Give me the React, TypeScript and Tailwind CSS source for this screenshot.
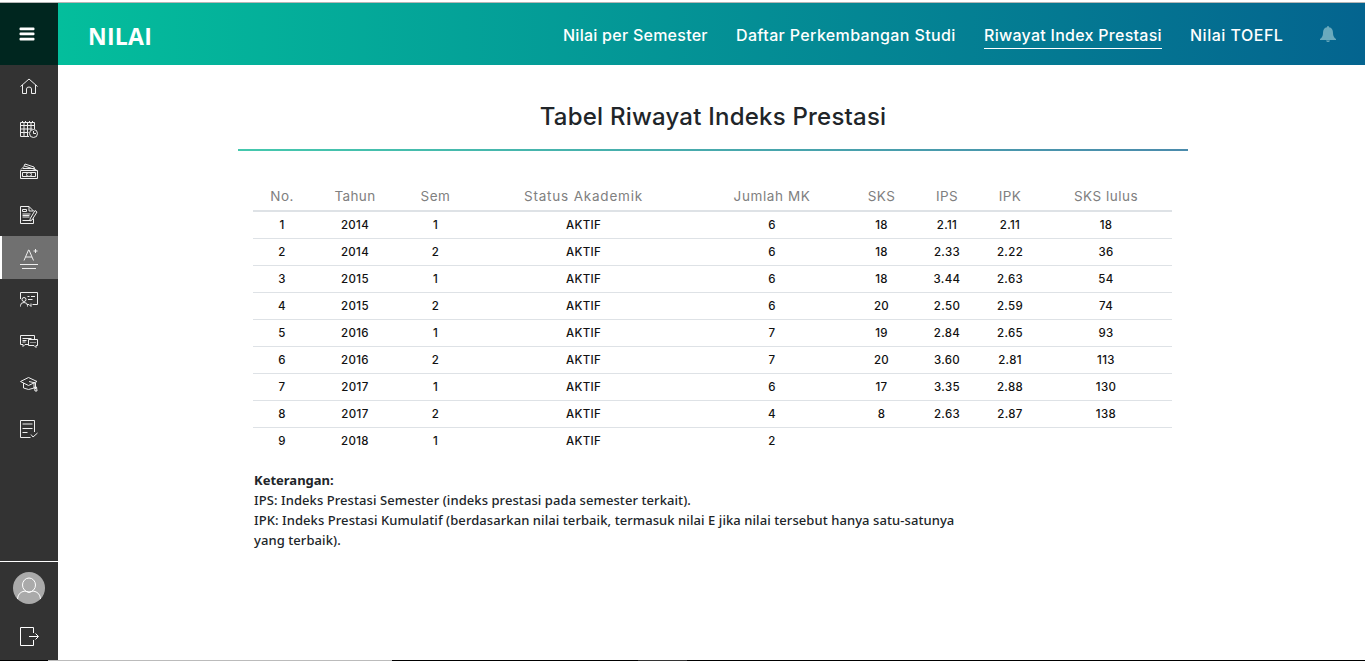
import React from "react";

const navLinks = [
  { label: "Nilai per Semester", box: "w-[145px] tracking-[0.26px]" },
  { label: "Daftar Perkembangan Studi", box: "w-[220px] tracking-[0.37px]" },
  { label: "Riwayat Index Prestasi", box: "w-[178px] tracking-[0.27px]", active: true },
  { label: "Nilai TOEFL", box: "w-[93px] tracking-[0.5px]" },
];

const headings = [
  { label: "No.", spacing: "tracking-[0.4px]" },
  { label: "Tahun", spacing: "tracking-[0.4px]" },
  { label: "Sem", spacing: "tracking-[0.5px]" },
  { label: "Status Akademik", spacing: "tracking-[0.8px]" },
  { label: "Jumlah MK", spacing: "tracking-[0.6px]" },
  { label: "SKS", spacing: "tracking-[0.4px]" },
  { label: "IPS", spacing: "tracking-[0.4px]" },
  { label: "IPK", spacing: "tracking-[0.4px]" },
  { label: "SKS lulus", spacing: "tracking-[0.5px]" },
];

const rows = [
  ["1", "2014", "1", "AKTIF", "6", "18", "2.11", "2.11", "18"],
  ["2", "2014", "2", "AKTIF", "6", "18", "2.33", "2.22", "36"],
  ["3", "2015", "1", "AKTIF", "6", "18", "3.44", "2.63", "54"],
  ["4", "2015", "2", "AKTIF", "6", "20", "2.50", "2.59", "74"],
  ["5", "2016", "1", "AKTIF", "7", "19", "2.84", "2.65", "93"],
  ["6", "2016", "2", "AKTIF", "7", "20", "3.60", "2.81", "113"],
  ["7", "2017", "1", "AKTIF", "6", "17", "3.35", "2.88", "130"],
  ["8", "2017", "2", "AKTIF", "4", "8", "2.63", "2.87", "138"],
  ["9", "2018", "1", "AKTIF", "2", "", "", "", ""],
];

const grid = "grid grid-cols-[58px_88px_73px_223px_154px_65px_66px_60px_132px] text-center";

function Icon({ children }: { children: React.ReactNode }) {
  return (
    <svg width="20" height="20" viewBox="0 0 20 20" fill="none" stroke="#eeeeee" strokeWidth="1" className="block">
      {children}
    </svg>
  );
}

const menu: { name: string; box: string; art: React.ReactNode }[] = [
  {
    name: "Beranda",
    box: "h-[43px]",
    art: <path d="M1.500 9.500 10 2l8.500 7.500M3.500 8v8.500h4V12q0-2 2.500-2t2.500 2v4.500h4V8" />,
  },
  {
    name: "Jadwal",
    box: "h-[43px]",
    art: (
      <>
        <path d="M10 16.500H1.500V2.500H15.500V9M1.500 5.500h14M1.500 9h12M1.500 12.500h8M5 2v14.500M8.500 2v14.500M12 2v8M3.500 1v2M6.500 1v2M10.500 1v2M13.500 1v2" />
        <circle cx="14.500" cy="13.500" r="4" fill="#333333" />
        <path d="M14.500 11v2.500h2.500" />
      </>
    ),
  },
  {
    name: "Keuangan",
    box: "h-[42px]",
    art: (
      <>
        <path d="M1.500 8.500h17v8h-17zM3.500 10.500h13v4h-13zM2 7.500 5.500 4l12 4M5 4l1-2 9 3 1 2.500M4 6.500h11" />
        <ellipse cx="10" cy="12.500" rx="2.500" ry="2" fill="#333333" />
      </>
    ),
  },
  {
    name: "Registrasi",
    box: "h-[43px]",
    art: (
      <>
        <path d="M14.500 13.500v5h-13v-17h8.500l4.500 4.500M10 1.500V6h4.500M3.500 4.500h4v2h-4zM3.500 9h8M3.500 10.500h7M3.500 12h7M3.500 15.500h8" />
        <path d="m11 14 5-8.500 2 1.500-5 8-2 1z" fill="#333333" />
      </>
    ),
  },
  {
    name: "Nilai",
    box: "h-[43px] bg-[#707070] border-l-2 border-white pr-[2px]",
    art: (
      <>
        <path d="M5 14.500 9.500 4h.5l4.500 10.500M6.500 11h6.500" />
        <path d="M16.500 3v4M14.500 5h4" />
        <path d="M1 18.500h18M3 22.500h14" />
      </>
    ),
  },
  {
    name: "Bimbingan",
    box: "h-[42px]",
    art: (
      <>
        <path d="M1.500 9V2.500h17v12h-5M8 14.500h2M1.500 16.500v-1q0-3 3.500-3t3.500 3v1" />
        <circle cx="5" cy="9.500" r="2" />
        <path d="M8.500 6.500h2M12 6.500h4M9 9.500h4.500M10 14.500l2 2v-3" />
      </>
    ),
  },
  {
    name: "Pesan",
    box: "h-[42px]",
    art: (
      <>
        <path d="M9 12.500H6l-2 2v-2H1.500v-9h14V7M3.500 6.500h9M3.500 8.500h4M3.500 10h3" />
        <path d="M9.500 7.500h9v6H17v2l-2-2H9.500z" fill="#333333" />
        <path d="M11.500 10.500h1M13.500 10.500h1M15.500 10.500h1" />
      </>
    ),
  },
  {
    name: "Wisuda",
    box: "h-[42px]",
    art: (
      <>
        <path d="M1.500 7.500 9.500 3.500 18 7.500 9.500 11.500zM4.500 9v5q5 3 10.500 0V9M10 7.500l6.500 1.500v6" />
        <path d="M15.500 13h2l.5 4h-2z" />
      </>
    ),
  },
  {
    name: "Survei",
    box: "h-[48px]",
    art: <path d="M15.500 13V1.500h-14v17h10M3.500 5h10M3.500 9.500h10M3.500 13.500h5M12 15.500l2 2.500 4.500-4" />,
  },
];

export default function App() {
  return (
    <div className="flex h-[661px] w-[1365px] flex-col overflow-hidden bg-white font-['Inter',sans-serif]">
      <div className="h-[3px] shrink-0 border-b border-[#b6b6b6] bg-white" />
      <div className="flex h-[657px] shrink-0">
        <aside className="flex w-[58px] shrink-0 flex-col bg-[#333333]">
          <button aria-label="Menu" className="flex h-[62px] items-center justify-center bg-[#00261f] pr-1">
            <svg width="16" height="14" viewBox="0 0 16 14" fill="#ffffff">
              <rect x=".5" y="0.500" width="15" height="2.700" rx="1" />
              <rect x=".5" y="5.600" width="15" height="2.700" rx="1" />
              <rect x=".5" y="10.700" width="15" height="2.700" rx="1" />
            </svg>
          </button>
          <nav className="flex flex-1 flex-col">
            {menu.map((m) => (
              <a key={m.name} aria-label={m.name} className={"flex shrink-0 items-center justify-center " + m.box}>
                {m.name === "Nilai" ? (
                  <svg width="20" height="24" viewBox="0 0 20 24" fill="none" stroke="#eeeeee">{m.art}</svg>
                ) : (
                  <Icon>{m.art}</Icon>
                )}
              </a>
            ))}
          </nav>
          <div className="flex h-[99px] flex-col items-center border-t border-white pt-[10px]">
            <svg width="32" height="32" viewBox="0 0 32 32" fill="none" stroke="#ffffff" className="mr-px">
              <circle cx="16" cy="16" r="16" fill="#aaaaaa" stroke="none" />
              <ellipse cx="16" cy="13" rx="6.500" ry="7" />
              <path d="M4.500 27q.5-7 7.500-8 4 3 8 0 7 1 7.500 8" />
            </svg>
            <svg width="20" height="20" viewBox="0 0 20 20" fill="none" stroke="#ffffff" className="mt-[22px]">
              <path d="M14.500 7V1.500h-13v18h13V14M10 10.500h9M16.500 7.500l3 3-3 3" />
            </svg>
          </div>
        </aside>
        <div className="flex flex-1 flex-col">
          <header className="flex h-[62px] shrink-0 items-center justify-between bg-linear-to-r/srgb from-[#04be9c] to-[#04648f] pr-[29px] pl-[30px] text-white">
            <h1 className="pt-[3px] font-['Open_Sans',sans-serif] text-[23px] leading-8 font-bold tracking-[0.25px]">NILAI</h1>
            <div className="flex items-center">
              <nav className="flex gap-7">
                {navLinks.map((l) => (
                  <a
                    key={l.label}
                    className={"mt-[3px] h-[26px] border-b text-[16px] leading-6 font-medium whitespace-nowrap " + l.box + (l.active ? " border-white" : " border-transparent")}
                  >
                    {l.label}
                  </a>
                ))}
              </nav>
              <svg width="16" height="16" viewBox="0 0 16 16" fill="#6aaabd" className="ml-[37px]">
                <path d="M8 0q1 0 1 1.300Q13 2 13 7q0 4 3 6v1H0v-1q3-2 3-6 0-5 4-5.700Q7 0 8 0M6 14.500h4Q9.500 16 8 16t-2-1.500" />
              </svg>
            </div>
          </header>
          <main className="ml-[180px] w-[950px]">
            <h2 className="flex h-[84px] items-center justify-center pt-[19px] text-[24px] font-medium tracking-[0.22px] whitespace-nowrap text-[#212529]">
              Tabel Riwayat Indeks Prestasi
            </h2>
            <div className="h-[2px] bg-linear-to-r/srgb from-[#44c8ad] to-[#4b8bac]" />
            <div className="mt-[30px] ml-[15px] w-[919px]">
              <div className={grid + " h-[31px] border-b-2 border-[#dee2e6] text-[13.5px] leading-[30px] text-[#808080]"}>
                {headings.map((h) => (
                  <div key={h.label} className={h.spacing}>{h.label}</div>
                ))}
              </div>
              {rows.map((r, i) => (
                <div key={r[0]} className={grid + " h-[27px] text-[11.5px] leading-[26px] font-medium tracking-[0.35px] text-[#111111]" + (i < 8 ? " border-b border-[#dee2e6]" : "")}>
                  {r.map((c, j) => (
                    <div key={j}>{c}</div>
                  ))}
                </div>
              ))}
              <div className="mt-[15px] pl-px font-['Noto_Sans',sans-serif] text-[13px] leading-5 font-medium tracking-[0.075px] whitespace-nowrap text-[#212529]">
                <p className="font-bold tracking-normal">Keterangan:</p>
                <p>IPS: Indeks Prestasi Semester (indeks prestasi pada semester terkait).</p>
                <p>IPK: Indeks Prestasi Kumulatif (berdasarkan nilai terbaik, termasuk nilai E jika nilai tersebut hanya satu-satunya</p>
                <p>yang terbaik).</p>
              </div>
            </div>
          </main>
        </div>
      </div>
      <div className="flex h-px shrink-0 bg-black">
        <div className="ml-12 w-[344px] bg-[#bbbbbb]" />
        <div className="ml-[246px] w-[49px] bg-[#333333]" />
      </div>
    </div>
  );
}
